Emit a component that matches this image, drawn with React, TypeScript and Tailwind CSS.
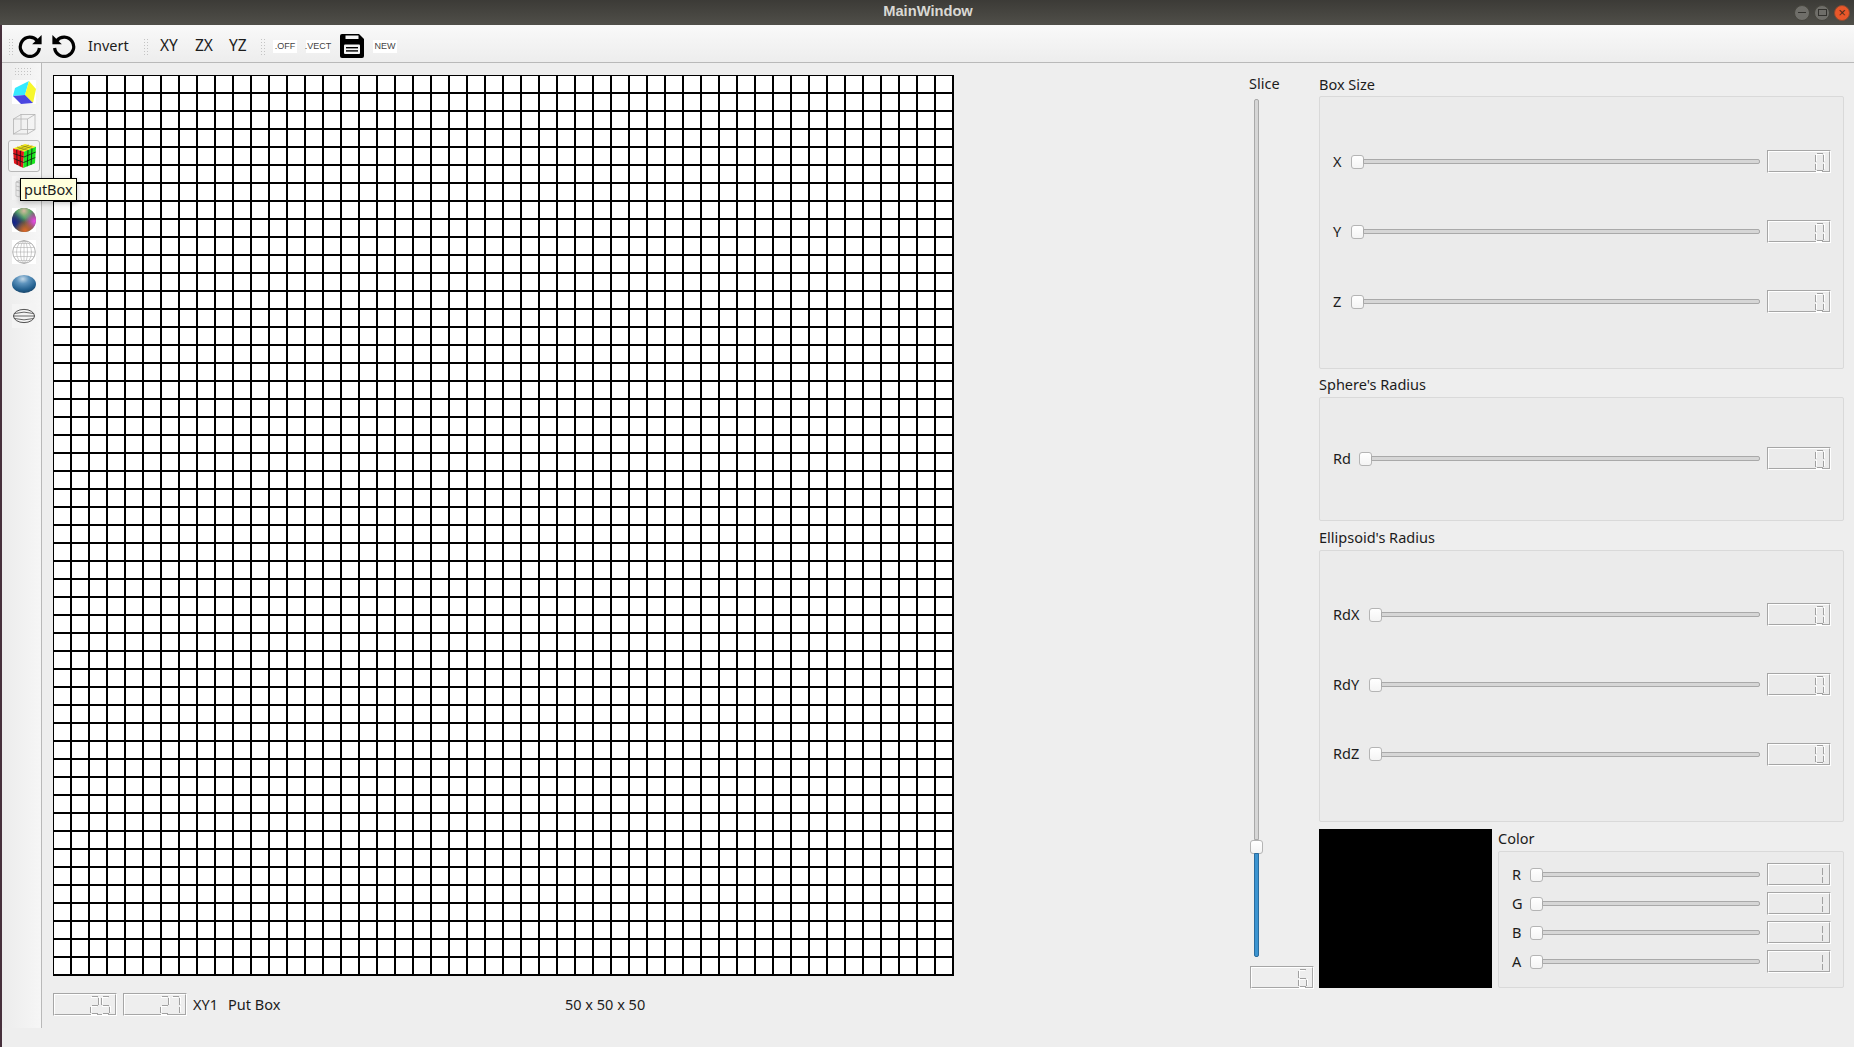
import React from "react";

const FONT = "font-['Noto_Sans','Open_Sans',sans-serif]";

const SEG: Record<string, string> = { "0": "abcdef", "1": "bc", "2": "abged", "5": "afgcd", "6": "afgedc", "7": "abc" };

function Digit({ ch, narrow }: { ch: string; narrow?: boolean }) {
  const on = SEG[ch] || "";
  const w = narrow ? 3 : 11;
  const r = narrow ? 1 : 9;
  const l = 1;
  const segs: Record<string, [number, number, number, number]> = {
    a: [l + 1, 1, r - 1, 1],
    g: [l + 1, 10, r - 1, 10],
    d: [l + 1, 18, r - 1, 18],
    f: [l, 2, l, 9],
    b: [r, 2, r, 9],
    e: [l, 11, l, 17],
    c: [r, 11, r, 17],
  };
  return (
    <svg width={w} height="20" viewBox={`0 0 ${w} 20`} shapeRendering="crispEdges">
      {on.split("").map((s) => {
        const [x1, y1, x2, y2] = segs[s];
        const horizontal = y1 === y2;
        return (
          <g key={s}>
            {!narrow && (
              <line
                x1={x1 + (horizontal ? 0 : 1.5)}
                y1={y1 + (horizontal ? 1.5 : 0)}
                x2={x2 + (horizontal ? 0 : 1.5)}
                y2={y2 + (horizontal ? 1.5 : 0)}
                stroke="#ffffff"
                strokeWidth="1"
              />
            )}
            <line x1={x1 + 0.5} y1={y1 + 0.5} x2={x2 + 0.5} y2={y2 + 0.5} stroke="#a0a0a0" strokeWidth="1" />
          </g>
        );
      })}
    </svg>
  );
}

function Lcd({ value, narrow }: { value: string; narrow?: boolean }) {
  return (
    <div
      aria-label={value}
      className="shrink-0 w-[64px] h-[23px] border border-t-[#a6a6a6] border-l-[#a6a6a6] border-r-white border-b-white"
    >
      <div
        className={`h-full border border-t-white border-l-white border-r-[#a6a6a6] border-b-[#a6a6a6] flex items-center justify-end ${
          narrow ? "pr-[5px]" : "pr-[4px]"
        }`}
      >
        {value.split("").map((c, i) => (
          <Digit key={i} ch={c} narrow={narrow} />
        ))}
      </div>
    </div>
  );
}

function Handle() {
  return (
    <div className="shrink-0 w-[13px] h-[14px] rounded-[3px] border border-[#b4b4b4] bg-gradient-to-b from-[#ffffff] to-[#f4f4f4]" />
  );
}

function HSlider() {
  return (
    <div className="flex-1 flex items-center min-w-0">
      <Handle />
      <div className="flex-1 h-[5px] -ml-px rounded-r-[2px] border border-[#a9a9a9] bg-[#d6d6d6]" />
    </div>
  );
}

function Row({ label, labelW, h, value, narrow }: { label: string; labelW: string; h: string; value: string; narrow?: boolean }) {
  return (
    <div className={`flex items-center ${h}`}>
      <span className={`${labelW} pl-[1px] shrink-0 text-[14.5px] text-[#1c1c1c]`}>{label}</span>
      <HSlider />
      <div className="w-[7px] shrink-0" />
      <Lcd value={value} narrow={narrow} />
    </div>
  );
}

function Group({ cls, children }: { cls: string; children: React.ReactNode }) {
  return (
    <div className={`${cls} rounded-[2px] border border-[#d9d9d9] bg-[#ebebeb] pl-[12px] pr-[12px] flex flex-col justify-center`}>
      {children}
    </div>
  );
}

function Title({ children, cls = "" }: { children: React.ReactNode; cls?: string }) {
  return <div className={`h-[20px] leading-[18px] text-[14.5px] text-[#1c1c1c] ${cls}`}>{children}</div>;
}

function Grip() {
  return <div className="w-[6px] h-[17px] shrink-0 bg-[radial-gradient(#c4c4c4_35%,transparent_40%)] bg-[length:3px_3px]" />;
}

function RedoIcon({ flip }: { flip?: boolean }) {
  return (
    <svg width="24" height="24" viewBox="0 0 24 24" className={flip ? "-scale-x-100" : ""}>
      <path d="M19.2 6.6 A9.6 9.6 0 1 0 21.4 14" fill="none" stroke="#000" strokeWidth="3.2" />
      <path d="M14.2 10.2 L23.6 10.2 L23.6 1 Z" fill="#000" />
    </svg>
  );
}

function SaveIcon() {
  return (
    <svg width="24" height="24" viewBox="0 0 24 24">
      <path d="M2 0 H19 L24 5 V22 a2 2 0 0 1 -2 2 H2 a2 2 0 0 1 -2 -2 V2 a2 2 0 0 1 2 -2 Z" fill="#000" />
      <rect x="5.5" y="1.5" width="13" height="3.5" fill="#f6f6f6" />
      <rect x="4" y="10.5" width="16" height="9.5" rx="1" fill="#f6f6f6" />
      <rect x="6" y="13" width="12" height="1.4" fill="#000" />
      <rect x="6" y="16.2" width="12" height="1.4" fill="#000" />
    </svg>
  );
}

function ColorCube() {
  return (
    <svg width="24" height="24" viewBox="0 0 24 24">
      <rect width="24" height="24" fill="#ffffff" />
      <path d="M3 8 L17 1 L13 15 L1 16 Z" fill="#36eaff" />
      <path d="M17 1 L24 9 L21 23 L13 15 Z" fill="#f7f72c" />
      <path d="M1 16 L13 15 L21 23 L9 24 Z" fill="#4a46e0" />
    </svg>
  );
}

function WireCube() {
  return (
    <svg width="24" height="24" viewBox="0 0 24 24" fill="none" stroke="#b4b4b4" strokeWidth="0.8">
      <rect x="1.5" y="7" width="14" height="15" />
      <rect x="9" y="2.5" width="14" height="15" />
      <path d="M1.5 7 L9 2.5 M15.5 7 L23 2.5 M15.5 22 L23 17.5 M1.5 22 L9 17.5" />
    </svg>
  );
}

function Rubik() {
  return (
    <svg width="24" height="24" viewBox="0 0 24 24">
      <path d="M1 4.5 L13 0 L24 2.7 L12 7.7 Z" fill="#f4ea1c" />
      <path d="M1 4.5 L12 7.7 L11.3 24 L2 19.3 Z" fill="#e3141c" />
      <path d="M12 7.7 L24 2.7 L23 19.3 L11.3 24 Z" fill="#19e51f" />
      <g stroke="#151515" strokeWidth="0.8" fill="none">
        <path d="M1.3 9.5 L12 13 L23.7 8 M1.7 14.5 L11.6 18.5 L23.3 13.5" />
        <path d="M4.7 5.6 L5.2 21 M8.4 6.7 L8.2 22.5 M16 6 L15.2 22.3 M20 4.4 L19 20.9" />
      </g>
      <g stroke="#6a6420" strokeWidth="0.5" fill="none">
        <path d="M5 3 L16 6.4 M9 1.5 L20 4.4 M5 5.7 L17 1 M8.4 6.7 L20.4 1.8" />
      </g>
    </svg>
  );
}

function WireBox() {
  return (
    <svg width="24" height="24" viewBox="0 0 24 24" fill="none" stroke="#b9b9b9" strokeWidth="0.7">
      <rect width="24" height="24" fill="#f4f4f4" stroke="none" />
      <path d="M4 6 L12 3 L20 5 L20 19 L12 22 L4 20 Z M4 6 L12 8 L20 5 M12 8 L12 22 M8 4.5 L8 21 M4 10 L12 12 L20 9 M4 14 L12 16 L20 13" />
    </svg>
  );
}

function ColorSphere() {
  return (
    <svg width="24" height="24" viewBox="0 0 24 24">
      <defs>
        <clipPath id="cs"><circle cx="12" cy="12" r="12" /></clipPath>
        <radialGradient id="cs1" cx="0.5" cy="0.12" r="0.5">
          <stop offset="0" stopColor="#d8b8a0" />
          <stop offset="0.6" stopColor="#55b56a" stopOpacity="0.85" />
          <stop offset="1" stopColor="#3d9a5a" stopOpacity="0" />
        </radialGradient>
        <radialGradient id="cs2" cx="0.08" cy="0.6" r="0.5">
          <stop offset="0" stopColor="#12208f" />
          <stop offset="1" stopColor="#12208f" stopOpacity="0" />
        </radialGradient>
        <radialGradient id="cs3" cx="0.95" cy="0.55" r="0.45">
          <stop offset="0" stopColor="#f04be8" />
          <stop offset="1" stopColor="#f04be8" stopOpacity="0" />
        </radialGradient>
        <radialGradient id="cs4" cx="0.55" cy="0.95" r="0.45">
          <stop offset="0" stopColor="#e0662a" />
          <stop offset="1" stopColor="#e0662a" stopOpacity="0" />
        </radialGradient>
      </defs>
      <rect width="24" height="24" fill="#ffffff" />
      <g clipPath="url(#cs)">
        <rect width="24" height="24" fill="#4c5a3c" />
        <rect width="24" height="24" fill="url(#cs1)" />
        <rect width="24" height="24" fill="url(#cs2)" />
        <rect width="24" height="24" fill="url(#cs3)" />
        <rect width="24" height="24" fill="url(#cs4)" />
      </g>
    </svg>
  );
}

function WireSphere() {
  return (
    <svg width="24" height="24" viewBox="0 0 24 24" fill="none" stroke="#a8a8a8" strokeWidth="0.55">
      <rect width="24" height="24" fill="#ffffff" stroke="none" />
      <circle cx="12" cy="12" r="11.3" strokeWidth="0.9" />
      <ellipse cx="12" cy="12" rx="7.5" ry="11.3" />
      <ellipse cx="12" cy="12" rx="3.5" ry="11.3" />
      <path d="M12 1 V23 M1 12 H23 M1.8 7.5 H22.2 M1.8 16.5 H22.2 M5 3.5 H19 M5 20.5 H19" />
    </svg>
  );
}

function BlueEllipsoid() {
  return (
    <svg width="24" height="24" viewBox="0 0 24 24">
      <defs>
        <radialGradient id="be" cx="0.45" cy="0.22" r="0.75">
          <stop offset="0" stopColor="#c4d9e8" />
          <stop offset="0.35" stopColor="#5d93bd" />
          <stop offset="0.8" stopColor="#23608f" />
          <stop offset="1" stopColor="#1b4a70" />
        </radialGradient>
      </defs>
      <ellipse cx="12" cy="12" rx="12" ry="9" fill="url(#be)" />
    </svg>
  );
}

function WireEllipsoid() {
  return (
    <svg width="24" height="24" viewBox="0 0 24 24" fill="none" stroke="#2a2a2a" strokeWidth="0.8">
      <rect width="24" height="24" fill="#f4f4f4" stroke="none" />
      <ellipse cx="12" cy="12" rx="10.5" ry="6.6" />
      <path d="M2.5 9.5 Q12 6.8 21.5 9.5 M2.5 14.5 Q12 17.2 21.5 14.5 M1.5 12 H22.5" strokeWidth="0.7" />
    </svg>
  );
}

function SideButton({ children, active }: { children: React.ReactNode; active?: boolean }) {
  return (
    <div
      className={`w-[32px] h-[32px] flex items-center justify-center rounded-[3px] border ${
        active ? "border-[#b8b8b8] bg-[#f4f4f4]" : "border-transparent"
      }`}
    >
      {children}
    </div>
  );
}

function TinyTile({ text }: { text: string }) {
  return (
    <div className="w-[24px] h-[13px] mt-[1px] bg-white flex items-center justify-center font-['Liberation_Sans',sans-serif] text-[9px] text-[#444]">
      {text}
    </div>
  );
}

function WinBtn({ children, close }: { children: React.ReactNode; close?: boolean }) {
  return (
    <div
      className={`w-[16px] h-[16px] rounded-full flex items-center justify-center border ${
        close ? "bg-[#e9572a] border-[#8f4a30]" : "bg-[#6f6e69] border-[#47463f]"
      }`}
    >
      {children}
    </div>
  );
}

function GridCanvas() {
  return (
    <svg width="901" height="901" viewBox="0 0 901 901" shapeRendering="crispEdges" className="block shrink-0">
      <defs>
        <pattern id="cell" x="0" y="0" width="18" height="18" patternUnits="userSpaceOnUse">
          <rect width="18" height="18" fill="#ffffff" />
          <rect x="0" y="0" width="1" height="18" fill="#000" />
          <rect x="17" y="0" width="1" height="18" fill="#000" />
          <rect x="0" y="0" width="18" height="1" fill="#000" />
          <rect x="0" y="17" width="18" height="1" fill="#000" />
        </pattern>
      </defs>
      <rect width="901" height="901" fill="url(#cell)" />
      <rect x="899" y="0" width="2" height="901" fill="#000" />
      <rect x="0" y="899" width="901" height="2" fill="#000" />
    </svg>
  );
}

export default function App() {
  return (
    <div className={`w-[1854px] h-[1047px] overflow-hidden flex flex-col bg-[#eeeeee] ${FONT}`}>
      {/* Title bar */}
      <div className="h-[25px] shrink-0 flex items-center bg-gradient-to-b from-[#3c3b37] to-[#504f49]">
        <div className="flex-1" />
        <div className="text-[14.7px] leading-[20px] pb-[4px] pl-[6px] font-bold text-[#d9d8d3] font-['Liberation_Sans',sans-serif]">MainWindow</div>
        <div className="flex-1 flex justify-end gap-[4px] pr-[4px]">
          <WinBtn>
            <div className="w-[8px] h-[1px] bg-[#33322e]" />
          </WinBtn>
          <WinBtn>
            <div className="w-[9px] h-[7px] border border-[#33322e]" />
          </WinBtn>
          <WinBtn close>
            <span className="text-[#4a2a1a] text-[13px] leading-none font-['Liberation_Sans',sans-serif]">×</span>
          </WinBtn>
        </div>
      </div>

      <div className="flex-1 flex min-h-0">
        <div className="w-[2px] shrink-0 bg-[#47303c]" />
        <div className="flex-1 flex flex-col min-w-0">
          {/* Top toolbar */}
          <div className="h-[38px] shrink-0 pt-[5px] flex items-center border-b border-[#b9b9b9] bg-gradient-to-b from-[#f9f9f9] to-[#ededed] text-[14.5px] text-[#1c1c1c]">
            <div className="w-[6px]" />
            <Grip />
            <div className="w-[4px]" />
            <RedoIcon />
            <div className="w-[10px]" />
            <RedoIcon flip />
            <div className="w-[12px]" />
            <span className="w-[40px]">Invert</span>
            <div className="w-[15px]" />
            <Grip />
            <div className="w-[11px]" />
            <span className="w-[20px] text-[15.5px]">XY</span>
            <div className="w-[15px]" />
            <span className="w-[19px] text-[15.5px]">ZX</span>
            <div className="w-[15px]" />
            <span className="w-[19px] text-[15.5px]">YZ</span>
            <div className="w-[12px]" />
            <Grip />
            <div className="w-[7px]" />
            <TinyTile text=".OFF" />
            <div className="w-[9px]" />
            <TinyTile text=".VECT" />
            <div className="w-[10px]" />
            <SaveIcon />
            <div className="w-[9px]" />
            <TinyTile text="NEW" />
          </div>

          {/* Workspace */}
          <div className="flex-1 flex min-h-0">
            {/* Left toolbar + canvas column */}
            <div className="relative w-[1246px] shrink-0 flex flex-col">
              <div className="flex h-[965px]">
                <div className="w-[40px] shrink-0 pl-[6px] border-r border-[#b9b9b9] bg-gradient-to-r from-[#ececec] to-[#f6f6f6] flex flex-col items-start">
                  <div className="h-[9px] w-[17px] ml-[6px] mt-[4px] shrink-0 bg-[radial-gradient(#c4c4c4_35%,transparent_40%)] bg-[length:3px_3px]" />
                  <SideButton><ColorCube /></SideButton>
                  <SideButton><WireCube /></SideButton>
                  <SideButton active><Rubik /></SideButton>
                  <SideButton><WireBox /></SideButton>
                  <SideButton><ColorSphere /></SideButton>
                  <SideButton><WireSphere /></SideButton>
                  <SideButton><BlueEllipsoid /></SideButton>
                  <SideButton><WireEllipsoid /></SideButton>
                </div>
                <div className="flex-1 min-w-0 pl-[11px] pt-[12px] flex flex-col">
                  <GridCanvas />
                  <div className="mt-[17px] flex items-center text-[14.5px] text-[#1c1c1c]">
                    <Lcd value="25" />
                    <div className="w-[6px]" />
                    <Lcd value="27" />
                    <div className="w-[6px]" />
                    <span className="w-[35px]">XY1</span>
                    <span className="w-[337px]">Put Box</span>
                    <span>50 x 50 x 50</span>
                  </div>
                </div>
              </div>
              <div className="absolute left-[18px] top-[115px] h-[23px] pl-[3px] pr-[3px] flex items-center bg-[#ffffdc] border border-black text-[14.5px] text-[#1c1c1c] shadow-[0_2px_6px_rgba(0,0,0,0.25)]">
                putBox
              </div>
            </div>

            {/* Slice column */}
            <div className="w-[71px] shrink-0 pt-[11px] flex flex-col">
              <Title cls="pl-[1px]">Slice</Title>
              <div className="ml-[2px] mt-[5px] w-[13px] flex flex-col items-center">
                <div className="w-[5px] h-[741px] rounded-t-[2px] border border-[#a9a9a9] bg-[#d6d6d6]" />
                <Handle />
                <div className="w-[5px] h-[104px] -mt-px rounded-b-[2px] border border-[#2a6c9e] bg-[#3c94d0]" />
              </div>
              <div className="ml-[2px] mt-[9px]">
                <Lcd value="6" />
              </div>
            </div>

            {/* Right column */}
            <div className="w-[525px] shrink-0 pt-[12px] flex flex-col">
              <Title>Box Size</Title>
              <div className="h-[1px]" />
              <Group cls="h-[273px] pb-[2px]">
                <Row label="X" labelW="w-[19px]" h="h-[70px]" value="0" />
                <Row label="Y" labelW="w-[19px]" h="h-[70px]" value="0" />
                <Row label="Z" labelW="w-[19px]" h="h-[70px]" value="0" />
              </Group>
              <div className="h-[6px]" />
              <Title>Sphere's Radius</Title>
              <div className="h-[2px]" />
              <Group cls="h-[124px] pb-[1px]">
                <Row label="Rd" labelW="w-[27px]" h="h-[70px]" value="0" />
              </Group>
              <div className="h-[7px]" />
              <Title>Ellipsoid's Radius</Title>
              <div className="h-[2px]" />
              <Group cls="h-[272px] pb-[4px]">
                <Row label="RdX" labelW="w-[37px]" h="h-[70px]" value="0" />
                <Row label="RdY" labelW="w-[37px]" h="h-[70px]" value="0" />
                <Row label="RdZ" labelW="w-[37px]" h="h-[69px]" value="0" />
              </Group>
              <div className="h-[7px]" />
              <div className="flex h-[159px]">
                <div className="w-[173px] shrink-0 bg-black" />
                <div className="w-[6px] shrink-0" />
                <div className="flex-1 min-w-0 flex flex-col">
                  <Title>Color</Title>
                  <div className="h-[2px]" />
                  <Group cls="h-[137px] pb-[3px]">
                    <Row label="R" labelW="w-[19px]" h="h-[29px]" value="1" narrow />
                    <Row label="G" labelW="w-[19px]" h="h-[29px]" value="1" narrow />
                    <Row label="B" labelW="w-[19px]" h="h-[29px]" value="1" narrow />
                    <Row label="A" labelW="w-[19px]" h="h-[29px]" value="1" narrow />
                  </Group>
                </div>
              </div>
            </div>
          </div>
        </div>
      </div>
    </div>
  );
}
